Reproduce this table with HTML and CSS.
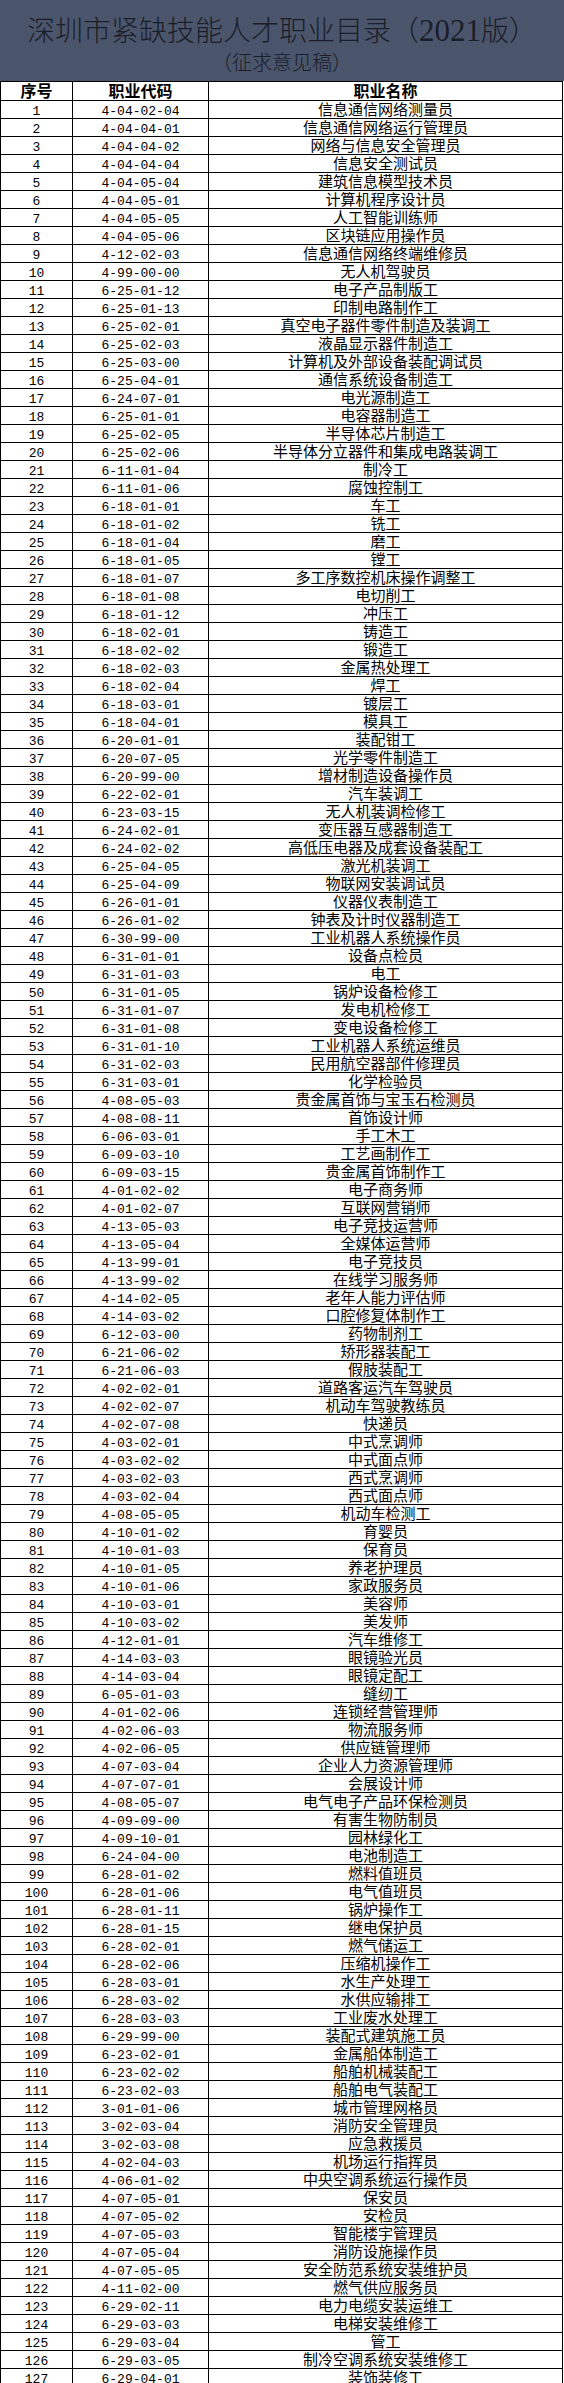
FILE: index.html
```html
<!DOCTYPE html>
<html lang="zh-CN">
<head>
<meta charset="utf-8">
<title>深圳市紧缺技能人才职业目录（2021版）</title>
<link rel="stylesheet" href="styles.css">
</head>
<body>
<header class="banner">
  <h1 class="title">深圳市紧缺技能人才职业目录（<span class="num">2021</span>版）</h1>
  <p class="subtitle">（征求意见稿）</p>
</header>
<div class="sheet">
  <div class="row head"><div class="cell">序号</div><div class="cell">职业代码</div><div class="cell">职业名称</div></div>
  <div class="row"><div class="cell seq">1</div><div class="cell code">4-04-02-04</div><div class="cell name">信息通信网络测量员</div></div>
  <div class="row"><div class="cell seq">2</div><div class="cell code">4-04-04-01</div><div class="cell name">信息通信网络运行管理员</div></div>
  <div class="row"><div class="cell seq">3</div><div class="cell code">4-04-04-02</div><div class="cell name">网络与信息安全管理员</div></div>
  <div class="row"><div class="cell seq">4</div><div class="cell code">4-04-04-04</div><div class="cell name">信息安全测试员</div></div>
  <div class="row"><div class="cell seq">5</div><div class="cell code">4-04-05-04</div><div class="cell name">建筑信息模型技术员</div></div>
  <div class="row"><div class="cell seq">6</div><div class="cell code">4-04-05-01</div><div class="cell name">计算机程序设计员</div></div>
  <div class="row"><div class="cell seq">7</div><div class="cell code">4-04-05-05</div><div class="cell name">人工智能训练师</div></div>
  <div class="row"><div class="cell seq">8</div><div class="cell code">4-04-05-06</div><div class="cell name">区块链应用操作员</div></div>
  <div class="row"><div class="cell seq">9</div><div class="cell code">4-12-02-03</div><div class="cell name">信息通信网络终端维修员</div></div>
  <div class="row"><div class="cell seq">10</div><div class="cell code">4-99-00-00</div><div class="cell name">无人机驾驶员</div></div>
  <div class="row"><div class="cell seq">11</div><div class="cell code">6-25-01-12</div><div class="cell name">电子产品制版工</div></div>
  <div class="row"><div class="cell seq">12</div><div class="cell code">6-25-01-13</div><div class="cell name">印制电路制作工</div></div>
  <div class="row"><div class="cell seq">13</div><div class="cell code">6-25-02-01</div><div class="cell name">真空电子器件零件制造及装调工</div></div>
  <div class="row"><div class="cell seq">14</div><div class="cell code">6-25-02-03</div><div class="cell name">液晶显示器件制造工</div></div>
  <div class="row"><div class="cell seq">15</div><div class="cell code">6-25-03-00</div><div class="cell name">计算机及外部设备装配调试员</div></div>
  <div class="row"><div class="cell seq">16</div><div class="cell code">6-25-04-01</div><div class="cell name">通信系统设备制造工</div></div>
  <div class="row"><div class="cell seq">17</div><div class="cell code">6-24-07-01</div><div class="cell name">电光源制造工</div></div>
  <div class="row"><div class="cell seq">18</div><div class="cell code">6-25-01-01</div><div class="cell name">电容器制造工</div></div>
  <div class="row"><div class="cell seq">19</div><div class="cell code">6-25-02-05</div><div class="cell name">半导体芯片制造工</div></div>
  <div class="row"><div class="cell seq">20</div><div class="cell code">6-25-02-06</div><div class="cell name">半导体分立器件和集成电路装调工</div></div>
  <div class="row"><div class="cell seq">21</div><div class="cell code">6-11-01-04</div><div class="cell name">制冷工</div></div>
  <div class="row"><div class="cell seq">22</div><div class="cell code">6-11-01-06</div><div class="cell name">腐蚀控制工</div></div>
  <div class="row"><div class="cell seq">23</div><div class="cell code">6-18-01-01</div><div class="cell name">车工</div></div>
  <div class="row"><div class="cell seq">24</div><div class="cell code">6-18-01-02</div><div class="cell name">铣工</div></div>
  <div class="row"><div class="cell seq">25</div><div class="cell code">6-18-01-04</div><div class="cell name">磨工</div></div>
  <div class="row"><div class="cell seq">26</div><div class="cell code">6-18-01-05</div><div class="cell name">镗工</div></div>
  <div class="row"><div class="cell seq">27</div><div class="cell code">6-18-01-07</div><div class="cell name">多工序数控机床操作调整工</div></div>
  <div class="row"><div class="cell seq">28</div><div class="cell code">6-18-01-08</div><div class="cell name">电切削工</div></div>
  <div class="row"><div class="cell seq">29</div><div class="cell code">6-18-01-12</div><div class="cell name">冲压工</div></div>
  <div class="row"><div class="cell seq">30</div><div class="cell code">6-18-02-01</div><div class="cell name">铸造工</div></div>
  <div class="row"><div class="cell seq">31</div><div class="cell code">6-18-02-02</div><div class="cell name">锻造工</div></div>
  <div class="row"><div class="cell seq">32</div><div class="cell code">6-18-02-03</div><div class="cell name">金属热处理工</div></div>
  <div class="row"><div class="cell seq">33</div><div class="cell code">6-18-02-04</div><div class="cell name">焊工</div></div>
  <div class="row"><div class="cell seq">34</div><div class="cell code">6-18-03-01</div><div class="cell name">镀层工</div></div>
  <div class="row"><div class="cell seq">35</div><div class="cell code">6-18-04-01</div><div class="cell name">模具工</div></div>
  <div class="row"><div class="cell seq">36</div><div class="cell code">6-20-01-01</div><div class="cell name">装配钳工</div></div>
  <div class="row"><div class="cell seq">37</div><div class="cell code">6-20-07-05</div><div class="cell name">光学零件制造工</div></div>
  <div class="row"><div class="cell seq">38</div><div class="cell code">6-20-99-00</div><div class="cell name">增材制造设备操作员</div></div>
  <div class="row"><div class="cell seq">39</div><div class="cell code">6-22-02-01</div><div class="cell name">汽车装调工</div></div>
  <div class="row"><div class="cell seq">40</div><div class="cell code">6-23-03-15</div><div class="cell name">无人机装调检修工</div></div>
  <div class="row"><div class="cell seq">41</div><div class="cell code">6-24-02-01</div><div class="cell name">变压器互感器制造工</div></div>
  <div class="row"><div class="cell seq">42</div><div class="cell code">6-24-02-02</div><div class="cell name">高低压电器及成套设备装配工</div></div>
  <div class="row"><div class="cell seq">43</div><div class="cell code">6-25-04-05</div><div class="cell name">激光机装调工</div></div>
  <div class="row"><div class="cell seq">44</div><div class="cell code">6-25-04-09</div><div class="cell name">物联网安装调试员</div></div>
  <div class="row"><div class="cell seq">45</div><div class="cell code">6-26-01-01</div><div class="cell name">仪器仪表制造工</div></div>
  <div class="row"><div class="cell seq">46</div><div class="cell code">6-26-01-02</div><div class="cell name">钟表及计时仪器制造工</div></div>
  <div class="row"><div class="cell seq">47</div><div class="cell code">6-30-99-00</div><div class="cell name">工业机器人系统操作员</div></div>
  <div class="row"><div class="cell seq">48</div><div class="cell code">6-31-01-01</div><div class="cell name">设备点检员</div></div>
  <div class="row"><div class="cell seq">49</div><div class="cell code">6-31-01-03</div><div class="cell name">电工</div></div>
  <div class="row"><div class="cell seq">50</div><div class="cell code">6-31-01-05</div><div class="cell name">锅炉设备检修工</div></div>
  <div class="row"><div class="cell seq">51</div><div class="cell code">6-31-01-07</div><div class="cell name">发电机检修工</div></div>
  <div class="row"><div class="cell seq">52</div><div class="cell code">6-31-01-08</div><div class="cell name">变电设备检修工</div></div>
  <div class="row"><div class="cell seq">53</div><div class="cell code">6-31-01-10</div><div class="cell name">工业机器人系统运维员</div></div>
  <div class="row"><div class="cell seq">54</div><div class="cell code">6-31-02-03</div><div class="cell name">民用航空器部件修理员</div></div>
  <div class="row"><div class="cell seq">55</div><div class="cell code">6-31-03-01</div><div class="cell name">化学检验员</div></div>
  <div class="row"><div class="cell seq">56</div><div class="cell code">4-08-05-03</div><div class="cell name">贵金属首饰与宝玉石检测员</div></div>
  <div class="row"><div class="cell seq">57</div><div class="cell code">4-08-08-11</div><div class="cell name">首饰设计师</div></div>
  <div class="row"><div class="cell seq">58</div><div class="cell code">6-06-03-01</div><div class="cell name">手工木工</div></div>
  <div class="row"><div class="cell seq">59</div><div class="cell code">6-09-03-10</div><div class="cell name">工艺画制作工</div></div>
  <div class="row"><div class="cell seq">60</div><div class="cell code">6-09-03-15</div><div class="cell name">贵金属首饰制作工</div></div>
  <div class="row"><div class="cell seq">61</div><div class="cell code">4-01-02-02</div><div class="cell name">电子商务师</div></div>
  <div class="row"><div class="cell seq">62</div><div class="cell code">4-01-02-07</div><div class="cell name">互联网营销师</div></div>
  <div class="row"><div class="cell seq">63</div><div class="cell code">4-13-05-03</div><div class="cell name">电子竞技运营师</div></div>
  <div class="row"><div class="cell seq">64</div><div class="cell code">4-13-05-04</div><div class="cell name">全媒体运营师</div></div>
  <div class="row"><div class="cell seq">65</div><div class="cell code">4-13-99-01</div><div class="cell name">电子竞技员</div></div>
  <div class="row"><div class="cell seq">66</div><div class="cell code">4-13-99-02</div><div class="cell name">在线学习服务师</div></div>
  <div class="row"><div class="cell seq">67</div><div class="cell code">4-14-02-05</div><div class="cell name">老年人能力评估师</div></div>
  <div class="row"><div class="cell seq">68</div><div class="cell code">4-14-03-02</div><div class="cell name">口腔修复体制作工</div></div>
  <div class="row"><div class="cell seq">69</div><div class="cell code">6-12-03-00</div><div class="cell name">药物制剂工</div></div>
  <div class="row"><div class="cell seq">70</div><div class="cell code">6-21-06-02</div><div class="cell name">矫形器装配工</div></div>
  <div class="row"><div class="cell seq">71</div><div class="cell code">6-21-06-03</div><div class="cell name">假肢装配工</div></div>
  <div class="row"><div class="cell seq">72</div><div class="cell code">4-02-02-01</div><div class="cell name">道路客运汽车驾驶员</div></div>
  <div class="row"><div class="cell seq">73</div><div class="cell code">4-02-02-07</div><div class="cell name">机动车驾驶教练员</div></div>
  <div class="row"><div class="cell seq">74</div><div class="cell code">4-02-07-08</div><div class="cell name">快递员</div></div>
  <div class="row"><div class="cell seq">75</div><div class="cell code">4-03-02-01</div><div class="cell name">中式烹调师</div></div>
  <div class="row"><div class="cell seq">76</div><div class="cell code">4-03-02-02</div><div class="cell name">中式面点师</div></div>
  <div class="row"><div class="cell seq">77</div><div class="cell code">4-03-02-03</div><div class="cell name">西式烹调师</div></div>
  <div class="row"><div class="cell seq">78</div><div class="cell code">4-03-02-04</div><div class="cell name">西式面点师</div></div>
  <div class="row"><div class="cell seq">79</div><div class="cell code">4-08-05-05</div><div class="cell name">机动车检测工</div></div>
  <div class="row"><div class="cell seq">80</div><div class="cell code">4-10-01-02</div><div class="cell name">育婴员</div></div>
  <div class="row"><div class="cell seq">81</div><div class="cell code">4-10-01-03</div><div class="cell name">保育员</div></div>
  <div class="row"><div class="cell seq">82</div><div class="cell code">4-10-01-05</div><div class="cell name">养老护理员</div></div>
  <div class="row"><div class="cell seq">83</div><div class="cell code">4-10-01-06</div><div class="cell name">家政服务员</div></div>
  <div class="row"><div class="cell seq">84</div><div class="cell code">4-10-03-01</div><div class="cell name">美容师</div></div>
  <div class="row"><div class="cell seq">85</div><div class="cell code">4-10-03-02</div><div class="cell name">美发师</div></div>
  <div class="row"><div class="cell seq">86</div><div class="cell code">4-12-01-01</div><div class="cell name">汽车维修工</div></div>
  <div class="row"><div class="cell seq">87</div><div class="cell code">4-14-03-03</div><div class="cell name">眼镜验光员</div></div>
  <div class="row"><div class="cell seq">88</div><div class="cell code">4-14-03-04</div><div class="cell name">眼镜定配工</div></div>
  <div class="row"><div class="cell seq">89</div><div class="cell code">6-05-01-03</div><div class="cell name">缝纫工</div></div>
  <div class="row"><div class="cell seq">90</div><div class="cell code">4-01-02-06</div><div class="cell name">连锁经营管理师</div></div>
  <div class="row"><div class="cell seq">91</div><div class="cell code">4-02-06-03</div><div class="cell name">物流服务师</div></div>
  <div class="row"><div class="cell seq">92</div><div class="cell code">4-02-06-05</div><div class="cell name">供应链管理师</div></div>
  <div class="row"><div class="cell seq">93</div><div class="cell code">4-07-03-04</div><div class="cell name">企业人力资源管理师</div></div>
  <div class="row"><div class="cell seq">94</div><div class="cell code">4-07-07-01</div><div class="cell name">会展设计师</div></div>
  <div class="row"><div class="cell seq">95</div><div class="cell code">4-08-05-07</div><div class="cell name">电气电子产品环保检测员</div></div>
  <div class="row"><div class="cell seq">96</div><div class="cell code">4-09-09-00</div><div class="cell name">有害生物防制员</div></div>
  <div class="row"><div class="cell seq">97</div><div class="cell code">4-09-10-01</div><div class="cell name">园林绿化工</div></div>
  <div class="row"><div class="cell seq">98</div><div class="cell code">6-24-04-00</div><div class="cell name">电池制造工</div></div>
  <div class="row"><div class="cell seq">99</div><div class="cell code">6-28-01-02</div><div class="cell name">燃料值班员</div></div>
  <div class="row"><div class="cell seq">100</div><div class="cell code">6-28-01-06</div><div class="cell name">电气值班员</div></div>
  <div class="row"><div class="cell seq">101</div><div class="cell code">6-28-01-11</div><div class="cell name">锅炉操作工</div></div>
  <div class="row"><div class="cell seq">102</div><div class="cell code">6-28-01-15</div><div class="cell name">继电保护员</div></div>
  <div class="row"><div class="cell seq">103</div><div class="cell code">6-28-02-01</div><div class="cell name">燃气储运工</div></div>
  <div class="row"><div class="cell seq">104</div><div class="cell code">6-28-02-06</div><div class="cell name">压缩机操作工</div></div>
  <div class="row"><div class="cell seq">105</div><div class="cell code">6-28-03-01</div><div class="cell name">水生产处理工</div></div>
  <div class="row"><div class="cell seq">106</div><div class="cell code">6-28-03-02</div><div class="cell name">水供应输排工</div></div>
  <div class="row"><div class="cell seq">107</div><div class="cell code">6-28-03-03</div><div class="cell name">工业废水处理工</div></div>
  <div class="row"><div class="cell seq">108</div><div class="cell code">6-29-99-00</div><div class="cell name">装配式建筑施工员</div></div>
  <div class="row"><div class="cell seq">109</div><div class="cell code">6-23-02-01</div><div class="cell name">金属船体制造工</div></div>
  <div class="row"><div class="cell seq">110</div><div class="cell code">6-23-02-02</div><div class="cell name">船舶机械装配工</div></div>
  <div class="row"><div class="cell seq">111</div><div class="cell code">6-23-02-03</div><div class="cell name">船舶电气装配工</div></div>
  <div class="row"><div class="cell seq">112</div><div class="cell code">3-01-01-06</div><div class="cell name">城市管理网格员</div></div>
  <div class="row"><div class="cell seq">113</div><div class="cell code">3-02-03-04</div><div class="cell name">消防安全管理员</div></div>
  <div class="row"><div class="cell seq">114</div><div class="cell code">3-02-03-08</div><div class="cell name">应急救援员</div></div>
  <div class="row"><div class="cell seq">115</div><div class="cell code">4-02-04-03</div><div class="cell name">机场运行指挥员</div></div>
  <div class="row"><div class="cell seq">116</div><div class="cell code">4-06-01-02</div><div class="cell name">中央空调系统运行操作员</div></div>
  <div class="row"><div class="cell seq">117</div><div class="cell code">4-07-05-01</div><div class="cell name">保安员</div></div>
  <div class="row"><div class="cell seq">118</div><div class="cell code">4-07-05-02</div><div class="cell name">安检员</div></div>
  <div class="row"><div class="cell seq">119</div><div class="cell code">4-07-05-03</div><div class="cell name">智能楼宇管理员</div></div>
  <div class="row"><div class="cell seq">120</div><div class="cell code">4-07-05-04</div><div class="cell name">消防设施操作员</div></div>
  <div class="row"><div class="cell seq">121</div><div class="cell code">4-07-05-05</div><div class="cell name">安全防范系统安装维护员</div></div>
  <div class="row"><div class="cell seq">122</div><div class="cell code">4-11-02-00</div><div class="cell name">燃气供应服务员</div></div>
  <div class="row"><div class="cell seq">123</div><div class="cell code">6-29-02-11</div><div class="cell name">电力电缆安装运维工</div></div>
  <div class="row"><div class="cell seq">124</div><div class="cell code">6-29-03-03</div><div class="cell name">电梯安装维修工</div></div>
  <div class="row"><div class="cell seq">125</div><div class="cell code">6-29-03-04</div><div class="cell name">管工</div></div>
  <div class="row"><div class="cell seq">126</div><div class="cell code">6-29-03-05</div><div class="cell name">制冷空调系统安装维修工</div></div>
  <div class="row"><div class="cell seq">127</div><div class="cell code">6-29-04-01</div><div class="cell name">装饰装修工</div></div>
</div>
</body>
</html>
```

FILE: styles.css
```css
html, body {
  margin: 0;
  padding: 0;
  background: #ffffff;
}

body {
  width: 564px;
  color: #000;
  font-family: "Noto Sans CJK SC", sans-serif;
}

.banner {
  box-sizing: border-box;
  height: 81px;
  padding-top: 11px;
  background: #4a556c;
  color: #1a1e29;
  text-align: center;
}

.title {
  margin: 0;
  font-family: "Noto Sans CJK SC", sans-serif;
  font-weight: 300;
  font-size: 28px;
  line-height: 36px;
  white-space: nowrap;
}

.title .num {
  font-family: "Liberation Serif", serif;
  font-size: 31px;
}

.subtitle {
  margin: 0;
  font-size: 20px;
  line-height: 26px;
  font-weight: 300;
}

.sheet {
  width: 561px;
  padding: 1px;
  background: #000;
  display: flex;
  flex-direction: column;
  gap: 1px;
}

.row {
  display: grid;
  grid-template-columns: 71px 135px 353px;
  column-gap: 1px;
  height: 17px;
}

.cell {
  background: #fff;
  text-align: center;
  white-space: nowrap;
  box-sizing: border-box;
  height: 17px;
}

.seq,
.code {
  font-family: "Liberation Mono", monospace;
  font-size: 13px;
  line-height: 17px;
  padding-top: 2px;
}

.name {
  font-family: "Noto Sans CJK SC", sans-serif;
  font-size: 15px;
  font-weight: 400;
  line-height: 16px;
}

.head {
  height: 18px;
}

.head .cell {
  height: 18px;
  font-size: 16px;
  font-weight: 700;
  line-height: 17px;
}
```
